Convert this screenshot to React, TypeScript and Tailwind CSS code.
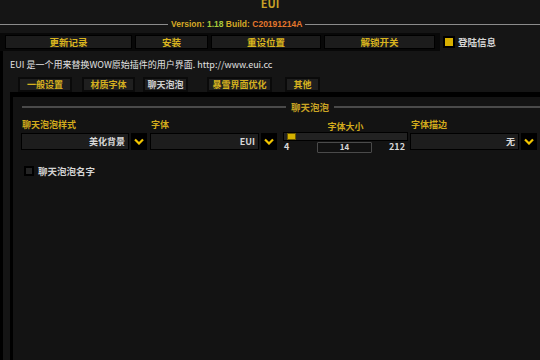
const font = { fontFamily: '"Noto Sans CJK SC", "Liberation Sans", sans-serif' };

const topButtons = [
  { label: "更新记录", w: "w-[127px]" },
  { label: "安装", w: "w-[73px]" },
  { label: "重设位置", w: "w-[110px]" },
  { label: "解锁开关", w: "w-[111px]" },
];

const tabs = [
  { label: "一般设置", cls: "ml-[15px] w-[54px]" },
  { label: "材质字体", cls: "ml-[10px] w-[53px]" },
  { label: "聊天泡泡", cls: "ml-[8px] w-[45px]", active: true },
  { label: "暴雪界面优化", cls: "ml-[19px] w-[65px]" },
  { label: "其他", cls: "ml-[13px] w-[35px]" },
];

function Chevron() {
  return (
    <svg width="10" height="7" viewBox="0 0 10 7">
      <path d="M1 1.5 L5 5.5 L9 1.5" fill="none" stroke="#f2c500" strokeWidth="2.2" />
    </svg>
  );
}

function Dropdown({ label, value, width }: { label: string; value: string; width: string }) {
  return (
    <div className={`flex flex-col ${width}`}>
      <div className="h-[10px] pl-[1px] text-[9px] leading-[10px] font-bold text-[#d2ab1c]">{label}</div>
      <div className="mt-[3px] flex h-[17px] gap-[2px]">
        <div className="flex flex-1 items-center justify-end border border-black bg-[#1d1d1d] pr-[3px] text-[9px] font-bold text-[#d8d8d8]">
          {value}
        </div>
        <div className="flex w-[16px] items-center justify-center bg-black">
          <Chevron />
        </div>
      </div>
    </div>
  );
}

function FontSizeSlider() {
  return (
    <div className="flex w-[125px] flex-col">
      <div className="mt-[2px] h-[10px] text-center text-[9px] leading-[10px] font-bold text-[#d2ab1c]">字体大小</div>
      <div className="relative h-[9px] border border-black bg-[#222]">
        <div className="absolute left-[3px] top-[0px] h-[7px] w-[9px] border border-[#6b5a00] bg-[#d4b100]" />
      </div>
      <div className="flex h-[12px] items-center">
        <span className="w-[34px] pl-[1px] text-[9px] font-bold text-[#d8d8d8]">4</span>
        <div className="flex h-[11px] w-[55px] items-center justify-center rounded-[1px] border border-[#4a4a4a] bg-[#111] text-[8px] font-bold text-[#d8d8d8]">
          14
        </div>
        <span className="ml-auto pr-[3px] text-[9px] font-bold text-[#d8d8d8]">212</span>
      </div>
    </div>
  );
}

export default function App() {
  return (
    <div className="flex h-[360px] w-[540px] flex-col overflow-hidden bg-[#151515]" style={font}>
      {/* header */}
      <div className="h-[18px] text-center">
        <div className="-mt-[2px] text-[11px] leading-[11px] font-bold text-[#c9a227]">EUI</div>
      </div>
      <div className="flex h-[12px] items-center">
        <div className="h-px w-[168px] bg-[#8c8c8c]" />
        <div className="px-[3px] text-[8.5px] font-bold whitespace-nowrap" style={{ fontFamily: '"Liberation Sans", sans-serif' }}>
          <span className="text-[#d4a925]">Version: </span>
          <span className="text-[#a6c93a]">1.18 </span>
          <span className="text-[#d4a925]">Build: </span>
          <span className="text-[#e5772c]">C20191214A</span>
        </div>
        <div className="h-px flex-1 bg-[#8c8c8c]" />
      </div>
      <div className="h-[3px]" />

      {/* button bar */}
      <div className="flex h-[18px] items-center">
        <div className="flex h-full w-[440px] items-center gap-[3px] bg-[#080808] pl-[5px]">
          {topButtons.map((b) => (
            <div
              key={b.label}
              className={`flex h-[14px] ${b.w} items-center justify-center border border-black bg-[#1c1c1c] text-[9.5px] font-bold text-[#d9b41e]`}
            >
              {b.label}
            </div>
          ))}
        </div>
        <div className="ml-[3px] flex h-[12px] w-[12px] items-center justify-center bg-black">
          <div className="h-[8px] w-[8px] bg-[#d8b000]" />
        </div>
        <span className="ml-[3px] text-[9.5px] font-bold text-[#d6d6d6]">登陆信息</span>
      </div>

      {/* main panel */}
      <div className="flex flex-1 flex-col border-l-[3px] border-black">
        <div className="mt-[8px] h-[12px] pl-[7px] text-[9px] leading-[12px] whitespace-nowrap text-[#e2e2e2]">
          EUI 是一个用来替换WOW原始插件的用户界面. http://www.eui.cc
        </div>

        <div className="mt-[6px] flex h-[15px]">
          {tabs.map((t) => (
            <div
              key={t.label}
              className={`flex h-full ${t.cls} items-center justify-center border-2 border-[#0a0a0a] bg-[#1f1f1f] text-[9px] font-bold ${
                t.active ? "text-[#d2d2d2]" : "text-[#d4b01f]"
              }`}
            >
              {t.label}
            </div>
          ))}
        </div>

        {/* tab panel */}
        <div className="ml-[7px] flex flex-1 flex-col border-l-[3px] border-t-[5px] border-black bg-[#131313]">
          <div className="mt-[5px] flex h-[10px] items-center pl-[9px]">
            <div className="h-[2px] w-[264px] bg-[#4a4a4a]" />
            <span className="px-[5px] text-[9.5px] font-bold text-[#c9a324]">聊天泡泡</span>
            <div className="h-[2px] flex-1 bg-[#4a4a4a]" />
          </div>

          <div className="mt-[8px] flex h-[33px] items-start pl-[8px]">
            <Dropdown label="聊天泡泡样式" value="美化背景" width="w-[126px]" />
            <div className="ml-[3px]">
              <Dropdown label="字体" value="EUI" width="w-[127px]" />
            </div>
            <div className="ml-[6px]">
              <FontSizeSlider />
            </div>
            <div className="ml-[2px]">
              <Dropdown label="字体描边" value="无" width="w-[127px]" />
            </div>
          </div>

          <div className="mt-[11px] flex items-center pl-[11px]">
            <div className="flex h-[10px] w-[10px] items-center justify-center bg-black">
              <div className="h-[6px] w-[6px] bg-[#242424]" />
            </div>
            <span className="ml-[4px] text-[9.5px] font-bold text-[#d4d4d4]">聊天泡泡名字</span>
          </div>
        </div>
      </div>
    </div>
  );
}
